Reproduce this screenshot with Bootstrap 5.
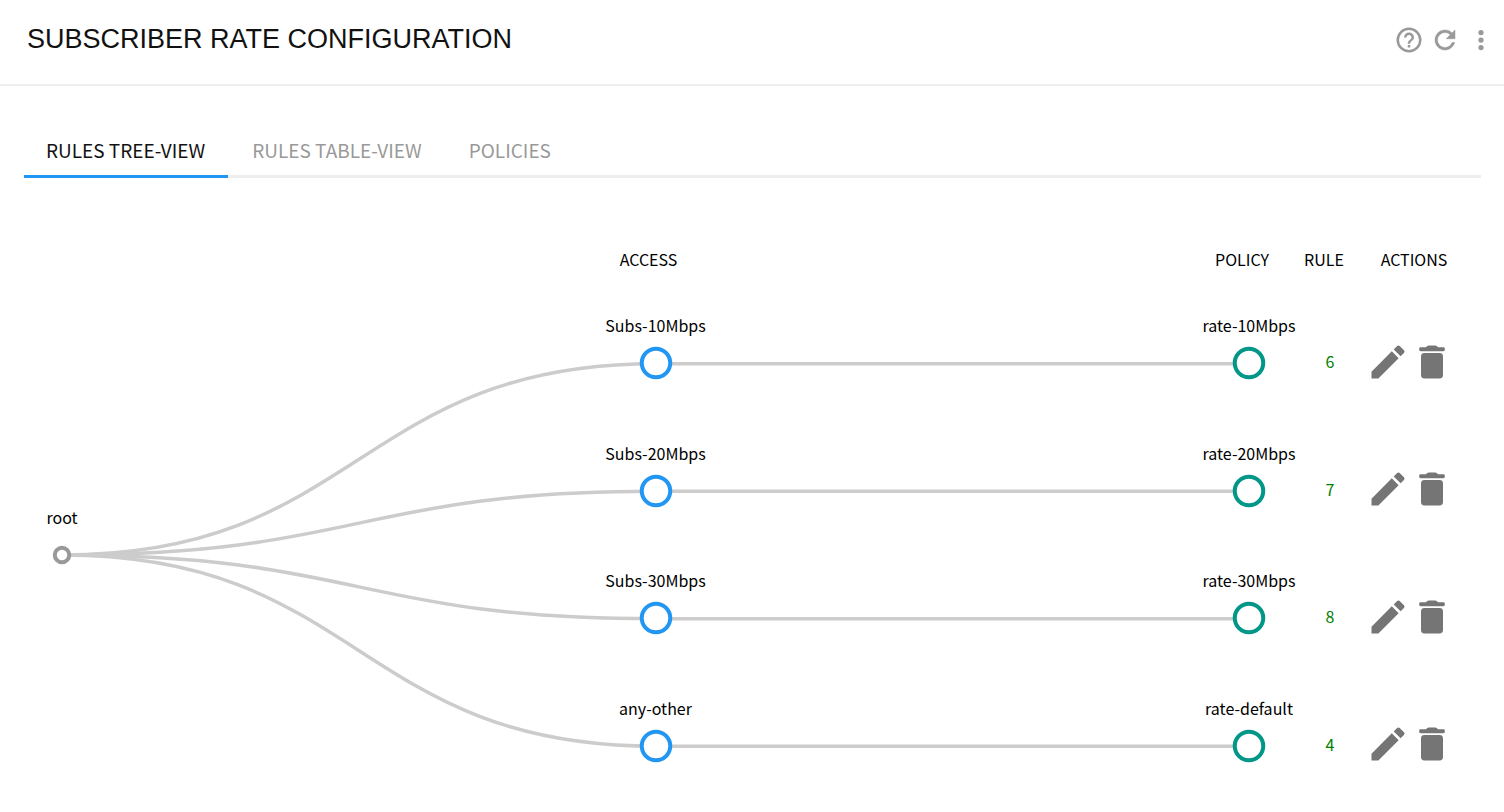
<!DOCTYPE html>
<html lang="en">
<head>
<meta charset="utf-8">
<meta name="viewport" content="width=device-width, initial-scale=1">
<title>Subscriber Rate Configuration</title>
<link rel="stylesheet" href="https://cdn.jsdelivr.net/npm/bootstrap@5.3.0/dist/css/bootstrap.min.css">
<script src="https://cdn.jsdelivr.net/npm/bootstrap@5.3.0/dist/js/bootstrap.bundle.min.js"></script>
<style>
body { font-family: "Noto Sans CJK SC", sans-serif; font-weight: 400; font-size: 16px; line-height: 24px; color: #000; background: #fff; }
svg { display: block; flex: none; }
.page-head { min-height: 86px; padding: 20px 8px 20px 27px; border-bottom: 2px solid #eee; }
.page-title { font-family: "Liberation Sans", sans-serif; font-size: 27px; line-height: 38px; font-weight: 400; color: #111; }
.icon-btn { padding: 0; border: 0; background: none; color: #999; }
.head-tools { gap: 6px; padding-top: 5px; }
.view-tabs { margin: 38px 23px 0 24px; box-shadow: inset 0 -3px #eee; }
.view-tabs .nav-link { padding: 12px 23px 11px 22px; font-size: 19px; line-height: 28px; color: #999; border-bottom: 3px solid transparent; border-radius: 0; }
.view-tabs .nav-link + .nav-link { padding-left: 24px; }
.view-tabs .nav-link.active { color: #111; border-bottom-color: #2196f3; }
.col-heads { display: grid; grid-template-columns: 117px 1fr 124px 1fr 124px 40px 160px; margin-top: 69px; text-align: center; }
.col-heads .h-actions { padding-right: 20px; }
.rule-tree { display: grid; grid-template-columns: 124px 1fr 124px 1fr 124px 38px 155px; grid-template-rows: repeat(4, 1fr); min-height: 510px; margin: 29px 0 0; }
.tree-links { grid-area: 1 / 1 / 5 / 6; justify-self: center; width: calc(100% - 124px); height: 510px; fill: none; stroke: #ccc; stroke-width: 3.5; }
.tree-links path { vector-effect: non-scaling-stroke; }
.tree-node { gap: 9px; padding-bottom: 34px; z-index: 1; white-space: nowrap; }
.tree-node svg { fill: #fff; stroke-width: 4; }
.is-root { grid-area: 1 / 1 / 5 / 2; stroke: #999; }
.is-access { grid-column: 3; stroke: #2196f3; }
.is-policy { grid-column: 5; stroke: #009688; }
.rule-no { grid-column: 6; color: green; padding-bottom: 5px; }
.rule-tools { grid-column: 7; padding: 0 0 4px 17px; }
.rule-tools .icon-btn { color: #757575; }
.r1 { grid-row: 1; } .r2 { grid-row: 2; } .r3 { grid-row: 3; } .r4 { grid-row: 4; }
</style>
</head>
<body>
<svg width="0" height="0" class="position-absolute" aria-hidden="true">
  <symbol id="pencil" viewBox="0 0 24 24"><path fill="currentColor" d="M3 17.25V21h3.75L17.81 9.94l-3.75-3.75zM20.71 7.04a1 1 0 0 0 0-1.41l-2.34-2.34a1 1 0 0 0-1.41 0l-1.83 1.83 3.75 3.75z"/></symbol>
  <symbol id="trash" viewBox="0 0 24 24"><path fill="currentColor" d="M6 9q0-1.9 1.9-1.9h8.2Q18 7.100 18 9v10.100Q18 21 16.100 21H7.900Q6 21 6 19.100zM5.800 4H8.700q.7-1 1.500-1h3.600q.8 0 1.500 1h2.900q.8 0 .8.800v.500q0 .8-.8.800H5.800Q5 6.100 5 5.300v-.5Q5 4 5.800 4z"/></symbol>
  <symbol id="ring" viewBox="0 0 34 34"><circle cx="17" cy="17" r="14.250"/></symbol>
  <symbol id="ring-root" viewBox="0 0 34 34"><circle cx="17" cy="17" r="7.250"/></symbol>
</svg>

<header class="page-head d-flex justify-content-between align-items-start">
  <h1 class="page-title m-0">SUBSCRIBER RATE CONFIGURATION</h1>
  <div class="head-tools d-flex">
    <button type="button" class="icon-btn" aria-label="Help"><svg width="30" height="30" viewBox="0 0 24 24" fill="currentColor"><path d="M11 18h2v-2h-2zm1-16a10 10 0 1 0 0 20 10 10 0 0 0 0-20zm0 18a8 8 0 1 1 0-16 8 8 0 0 1 0 16zm0-14a4 4 0 0 0-4 4h2a2 2 0 1 1 4 0c0 2-3 1.750-3 5h2c0-2.250 3-2.500 3-5a4 4 0 0 0-4-4z"/></svg></button>
    <button type="button" class="icon-btn" aria-label="Refresh"><svg width="30" height="30" viewBox="0 0 24 24" fill="currentColor"><path d="M17.650 6.350A8 8 0 1 0 19.730 14h-2.080A6 6 0 1 1 12 6c1.660 0 3.140.69 4.220 1.780L13 11h7V4z" stroke="currentColor" stroke-width=".4"/></svg></button>
    <button type="button" class="icon-btn" aria-label="More options"><svg width="30" height="30" viewBox="0 0 24 24" fill="currentColor"><circle cx="12" cy="6" r="2.100"/><circle cx="12" cy="12" r="2.100"/><circle cx="12" cy="18" r="2.100"/></svg></button>
  </div>
</header>

<main>
  <nav class="view-tabs nav" aria-label="Views">
    <a class="nav-link active" aria-current="page" href="#tree">RULES TREE-VIEW</a>
    <a class="nav-link" href="#table">RULES TABLE-VIEW</a>
    <a class="nav-link" href="#policies">POLICIES</a>
  </nav>

  <div class="col-heads">
    <span></span><span></span><span>ACCESS</span><span></span><span>POLICY</span><span>RULE</span><span class="h-actions">ACTIONS</span>
  </div>

  <section class="rule-tree" id="tree" aria-label="Rules tree">
    <svg class="tree-links" viewBox="0 0 1187 510" preserveAspectRatio="none" aria-hidden="true">
      <path d="M0 255C297 255 297 63.750 593.500 63.750H1187"/>
      <path d="M0 255C297 255 297 191.250 593.500 191.250H1187"/>
      <path d="M0 255C297 255 297 318.750 593.500 318.750H1187"/>
      <path d="M0 255C297 255 297 446.250 593.500 446.250H1187"/>
    </svg>

    <div class="tree-node is-root d-flex flex-column align-items-center justify-content-center"><span>root</span><svg width="34" height="34"><use href="#ring-root"/></svg></div>

    <div class="tree-node is-access r1 d-flex flex-column align-items-center justify-content-center"><span>Subs-10Mbps</span><svg width="34" height="34"><use href="#ring"/></svg></div>
    <div class="tree-node is-policy r1 d-flex flex-column align-items-center justify-content-center"><span>rate-10Mbps</span><svg width="34" height="34"><use href="#ring"/></svg></div>
    <div class="rule-no r1 d-flex align-items-center justify-content-center">6</div>
    <div class="rule-tools r1 d-flex align-items-center">
      <button type="button" class="icon-btn" aria-label="Edit rule 6"><svg width="44" height="44"><use href="#pencil"/></svg></button>
      <button type="button" class="icon-btn" aria-label="Delete rule 6"><svg width="44" height="44"><use href="#trash"/></svg></button>
    </div>

    <div class="tree-node is-access r2 d-flex flex-column align-items-center justify-content-center"><span>Subs-20Mbps</span><svg width="34" height="34"><use href="#ring"/></svg></div>
    <div class="tree-node is-policy r2 d-flex flex-column align-items-center justify-content-center"><span>rate-20Mbps</span><svg width="34" height="34"><use href="#ring"/></svg></div>
    <div class="rule-no r2 d-flex align-items-center justify-content-center">7</div>
    <div class="rule-tools r2 d-flex align-items-center">
      <button type="button" class="icon-btn" aria-label="Edit rule 7"><svg width="44" height="44"><use href="#pencil"/></svg></button>
      <button type="button" class="icon-btn" aria-label="Delete rule 7"><svg width="44" height="44"><use href="#trash"/></svg></button>
    </div>

    <div class="tree-node is-access r3 d-flex flex-column align-items-center justify-content-center"><span>Subs-30Mbps</span><svg width="34" height="34"><use href="#ring"/></svg></div>
    <div class="tree-node is-policy r3 d-flex flex-column align-items-center justify-content-center"><span>rate-30Mbps</span><svg width="34" height="34"><use href="#ring"/></svg></div>
    <div class="rule-no r3 d-flex align-items-center justify-content-center">8</div>
    <div class="rule-tools r3 d-flex align-items-center">
      <button type="button" class="icon-btn" aria-label="Edit rule 8"><svg width="44" height="44"><use href="#pencil"/></svg></button>
      <button type="button" class="icon-btn" aria-label="Delete rule 8"><svg width="44" height="44"><use href="#trash"/></svg></button>
    </div>

    <div class="tree-node is-access r4 d-flex flex-column align-items-center justify-content-center"><span>any-other</span><svg width="34" height="34"><use href="#ring"/></svg></div>
    <div class="tree-node is-policy r4 d-flex flex-column align-items-center justify-content-center"><span>rate-default</span><svg width="34" height="34"><use href="#ring"/></svg></div>
    <div class="rule-no r4 d-flex align-items-center justify-content-center">4</div>
    <div class="rule-tools r4 d-flex align-items-center">
      <button type="button" class="icon-btn" aria-label="Edit rule 4"><svg width="44" height="44"><use href="#pencil"/></svg></button>
      <button type="button" class="icon-btn" aria-label="Delete rule 4"><svg width="44" height="44"><use href="#trash"/></svg></button>
    </div>
  </section>
</main>
</body>
</html>
